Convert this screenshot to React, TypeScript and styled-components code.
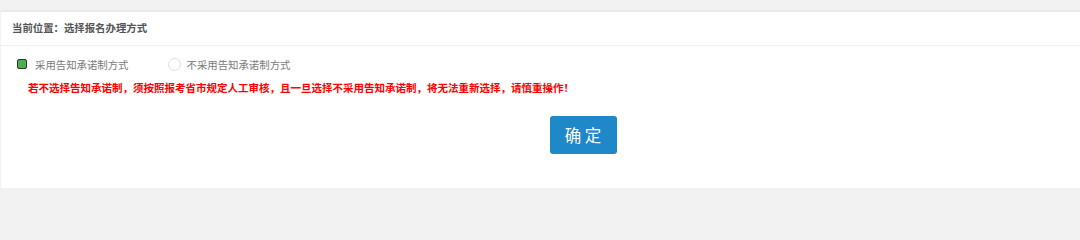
import { useState } from "react";
import styled, { createGlobalStyle } from "styled-components";

const GlobalStyle = createGlobalStyle`
  html, body {
    margin: 0;
    padding: 0;
    background: #f2f2f2;
    font-family: "Noto Sans CJK SC", "Liberation Sans", sans-serif;
  }
`;

const Page = styled.div`
  padding: 10px 0 0 1px;
  height: 225px;
  box-sizing: border-box;
`;

const Panel = styled.div`
  background: #ffffff;
  border-top: 2px solid #e5ebf0;
  height: 178px;
  box-sizing: border-box;
`;

const PanelHeader = styled.div`
  height: 34px;
  display: flex;
  align-items: center;
  padding: 0 0 3px 11px;
  box-sizing: border-box;
  border-bottom: 1px solid #eeeeee;
  color: #555555;
  font-size: 10.4px;
  font-weight: 700;
`;

const PanelBody = styled.div`
  padding: 9px 0 0 16px;
`;

const OptionRow = styled.div`
  display: flex;
  align-items: center;
  height: 18px;
`;

const Option = styled.label`
  display: flex;
  align-items: center;
  margin-right: 39px;
  color: #7a7a7a;
  font-size: 10.4px;
  cursor: pointer;
`;

const SquareMark = styled.span<{ $checked?: boolean }>`
  width: 8px;
  height: 8px;
  border: 1px solid #333333;
  border-radius: 2px;
  background: ${(p) => (p.$checked ? "#4caf50" : "#ffffff")};
  margin-right: 8px;
`;

const CircleMark = styled.span<{ $checked?: boolean }>`
  width: 11px;
  height: 11px;
  border: 1px solid #dddddd;
  border-radius: 50%;
  background: ${(p) => (p.$checked ? "#4caf50" : "#ffffff")};
  margin-right: 6px;
`;

const Warning = styled.p`
  margin: 7px 0 0 11px;
  color: #ff0000;
  font-size: 10.5px;
  font-weight: 700;
  line-height: 16px;
`;

const Actions = styled.div`
  display: flex;
  justify-content: center;
  padding: 20px 0 0 69px;
`;

const ConfirmButton = styled.button`
  width: 67px;
  height: 38px;
  border: none;
  border-radius: 3px;
  background: #1e88c8;
  color: #ffffff;
  font-family: "Noto Sans CJK SC", "Liberation Sans", sans-serif;
  font-size: 16.5px;
  padding: 0;
  white-space: pre;
  cursor: pointer;
`;

const App = () => {
  const [useCommit, setUseCommit] = useState(true);

  return (
    <>
      <GlobalStyle />
      <Page>
        <Panel>
          <PanelHeader>当前位置：选择报名办理方式</PanelHeader>
          <PanelBody>
            <OptionRow>
              <Option onClick={() => setUseCommit(true)}>
                <SquareMark $checked={useCommit} />
                采用告知承诺制方式
              </Option>
              <Option onClick={() => setUseCommit(false)}>
                <CircleMark $checked={!useCommit} />
                不采用告知承诺制方式
              </Option>
            </OptionRow>
            <Warning>
              若不选择告知承诺制，须按照报考省市规定人工审核，且一旦选择不采用告知承诺制，将无法重新选择，请慎重操作！
            </Warning>
            <Actions>
              <ConfirmButton>确 定</ConfirmButton>
            </Actions>
          </PanelBody>
        </Panel>
      </Page>
    </>
  );
};

export default App;
